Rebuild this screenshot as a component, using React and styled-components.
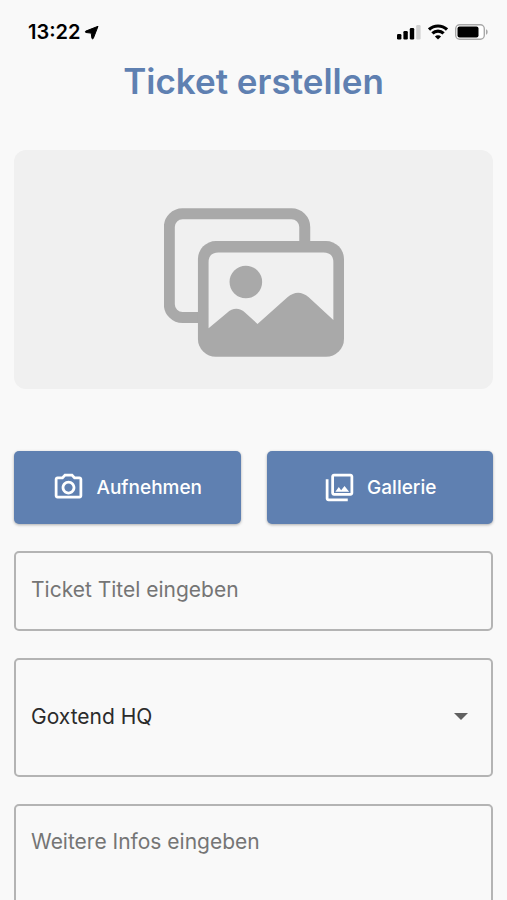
import { useState } from 'react'
import styled, { createGlobalStyle } from 'styled-components'
import { MdOutlineCameraAlt, MdOutlinePhotoLibrary } from 'react-icons/md'

const colors = {
    background: '#f9f9f9',
    primary: '#5f80b1',
    preview: '#f0f0f0',
    illustration: '#a9a9a9',
    border: '#b4b4b4',
    placeholder: '#757575',
    text: '#2b2b2b',
}

export default function App() {
    const [title, setTitle] = useState('')
    const [location, setLocation] = useState('Goxtend HQ')
    const [infos, setInfos] = useState('')

    return (
        <>
            <GlobalStyle />
            <Screen>
                <StatusBar />
                <Title>Ticket erstellen</Title>
                <Preview>
                    <PreviewIllustration />
                </Preview>
                <TicketForm onSubmit={(e) => e.preventDefault()}>
                    <ButtonRow>
                        <ActionButton type="button">
                            <MdOutlineCameraAlt size={33} aria-hidden="true" />
                            Aufnehmen
                        </ActionButton>
                        <ActionButton type="button">
                            <MdOutlinePhotoLibrary size={33} aria-hidden="true" />
                            Gallerie
                        </ActionButton>
                    </ButtonRow>
                    <TextField
                        type="text"
                        aria-label="Ticket Titel"
                        placeholder="Ticket Titel eingeben"
                        value={title}
                        onChange={(e) => setTitle(e.target.value)}
                    />
                    <SelectWrapper>
                        <Select
                            aria-label="Standort"
                            value={location}
                            onChange={(e) => setLocation(e.target.value)}
                        >
                            <option>Goxtend HQ</option>
                        </Select>
                        <SelectArrow viewBox="0 0 14 7" aria-hidden="true">
                            <path d="M0 0h14L7 7z" />
                        </SelectArrow>
                    </SelectWrapper>
                    <TextArea
                        aria-label="Weitere Infos"
                        placeholder="Weitere Infos eingeben"
                        value={infos}
                        onChange={(e) => setInfos(e.target.value)}
                    />
                </TicketForm>
            </Screen>
        </>
    )
}

function StatusBar() {
    return (
        <StatusWrapper>
            <StatusGroup $gap={4}>
                <Clock>13:22</Clock>
                <svg width="16" height="15" viewBox="0 0 16 15" aria-hidden="true">
                    <path
                        d="M14 1.3 1.8 6.1c-.7.3-.5 1.3.2 1.4l5.2.6.7 5.1c.1.7 1 .9 1.4.2z"
                        stroke="#000"
                        strokeLinejoin="round"
                    />
                </svg>
            </StatusGroup>
            <StatusGroup $gap={7}>
                <svg width="24" height="16" viewBox="0 0 24 16" aria-hidden="true">
                    <rect x="0" y="10" width="4.4" height="5.5" rx="1.2" />
                    <rect x="6.4" y="7" width="4.4" height="8.5" rx="1.2" />
                    <rect x="12.8" y="4" width="4.4" height="11.5" rx="1.2" />
                    <rect x="19.2" y="1" width="4.4" height="14.5" rx="1.2" fill="#d0d0d0" />
                </svg>
                <svg width="20" height="16" viewBox="0 0 20 16" aria-hidden="true">
                    <g fill="none" stroke="#000" strokeWidth="3.2">
                        <path d="M1 5.6a13 13 0 0 1 18 0" />
                        <path d="M4.4 9.4a8.1 8.1 0 0 1 11.2 0" />
                    </g>
                    <path d="m10 15.6-3.1-3.1a4.4 4.4 0 0 1 6.2 0z" />
                </svg>
                <svg width="33" height="16" viewBox="0 0 33 16" aria-hidden="true">
                    <rect x=".7" y=".7" width="28.6" height="14.6" rx="4" fill="#fff" stroke="#a8a8a8" strokeWidth="1.4" />
                    <rect x="2.5" y="2.6" width="21" height="10.8" rx="2" />
                    <path d="M31 5.3c2.2.8 2.2 4.6 0 5.4z" fill="#a8a8a8" />
                </svg>
            </StatusGroup>
        </StatusWrapper>
    )
}

function PreviewIllustration() {
    return (
        <Illustration viewBox="0 0 541 447" aria-hidden="true">
            <rect x="16" y="17" width="407" height="312" rx="40" fill="none" stroke={colors.illustration} strokeWidth="33" />
            <rect x="102" y="99" width="439" height="348" rx="54" fill={colors.illustration} />
            <path
                d="M134 361V163q0-30 30-30h315q30 0 30 30v173l-74-68q-32-28-64 0l-90 80-36-33q-28-25-56 0z"
                fill={colors.preview}
            />
            <circle cx="246" cy="222" r="49" fill={colors.illustration} />
        </Illustration>
    )
}

const GlobalStyle = createGlobalStyle`
    *, *::before, *::after {
        box-sizing: border-box;
    }
    body {
        margin: 0;
        background-color: ${colors.background};
        font-family: Inter, "Liberation Sans", sans-serif;
    }
    button, input, select, textarea {
        font-family: inherit;
    }
`
const Screen = styled.main`
    min-height: 100vh;
    padding: 20px 14px 0;
    background-color: ${colors.background};
`
const StatusWrapper = styled.div`
    display: flex;
    justify-content: space-between;
    align-items: center;
    height: 24px;
    padding: 0 5px 0 14px;
`
const StatusGroup = styled.div`
    display: flex;
    align-items: center;
    gap: ${({ $gap }) => $gap}px;
`
const Clock = styled.span`
    font-size: 20px;
    line-height: 24px;
    font-weight: 600;
    color: #000;
`
const Title = styled.h1`
    margin: 16px 0 0;
    font-size: 35px;
    line-height: 42px;
    font-weight: 600;
    text-align: center;
    color: ${colors.primary};
`
const Preview = styled.div`
    display: flex;
    justify-content: center;
    margin-top: 48px;
    padding: 58px 0 32px;
    border-radius: 12px;
    background-color: ${colors.preview};
`
const Illustration = styled.svg`
    width: 180px;
    height: 149px;
`
const TicketForm = styled.form`
    display: flex;
    flex-direction: column;
    gap: 27px;
    margin-top: 62px;
`
const ButtonRow = styled.div`
    display: grid;
    grid-template-columns: 1fr 1fr;
    gap: 26px;
`
const ActionButton = styled.button`
    display: flex;
    justify-content: center;
    align-items: center;
    gap: 11px;
    height: 73px;
    padding: 0 16px;
    border: none;
    border-radius: 5px;
    background-color: ${colors.primary};
    box-shadow: 0 1px 3px rgba(0, 0, 0, 0.3);
    font-size: 19px;
    font-weight: 500;
    color: #fff;
    cursor: pointer;
`
const TextField = styled.input`
    width: 100%;
    height: 80px;
    padding: 0 15px 3px;
    border: 2px solid ${colors.border};
    border-radius: 5px;
    background-color: transparent;
    font-size: 21px;
    color: ${colors.text};
    &::placeholder {
        color: ${colors.placeholder};
        opacity: 1;
    }
`
const SelectWrapper = styled.div`
    display: grid;
    align-items: center;
    & > * {
        grid-area: 1 / 1;
    }
`
const Select = styled.select`
    appearance: none;
    width: 100%;
    height: 119px;
    padding: 0 48px 3px 15px;
    border: 2px solid ${colors.border};
    border-radius: 5px;
    background-color: transparent;
    font-size: 21px;
    color: ${colors.text};
`
const SelectArrow = styled.svg`
    justify-self: end;
    width: 14px;
    height: 7px;
    margin: 0 25px 2px 0;
    fill: #616161;
    pointer-events: none;
`
const TextArea = styled(TextField).attrs({ as: 'textarea' })`
    display: block;
    height: 160px;
    padding: 22px 15px;
    line-height: 28px;
    resize: none;
`
